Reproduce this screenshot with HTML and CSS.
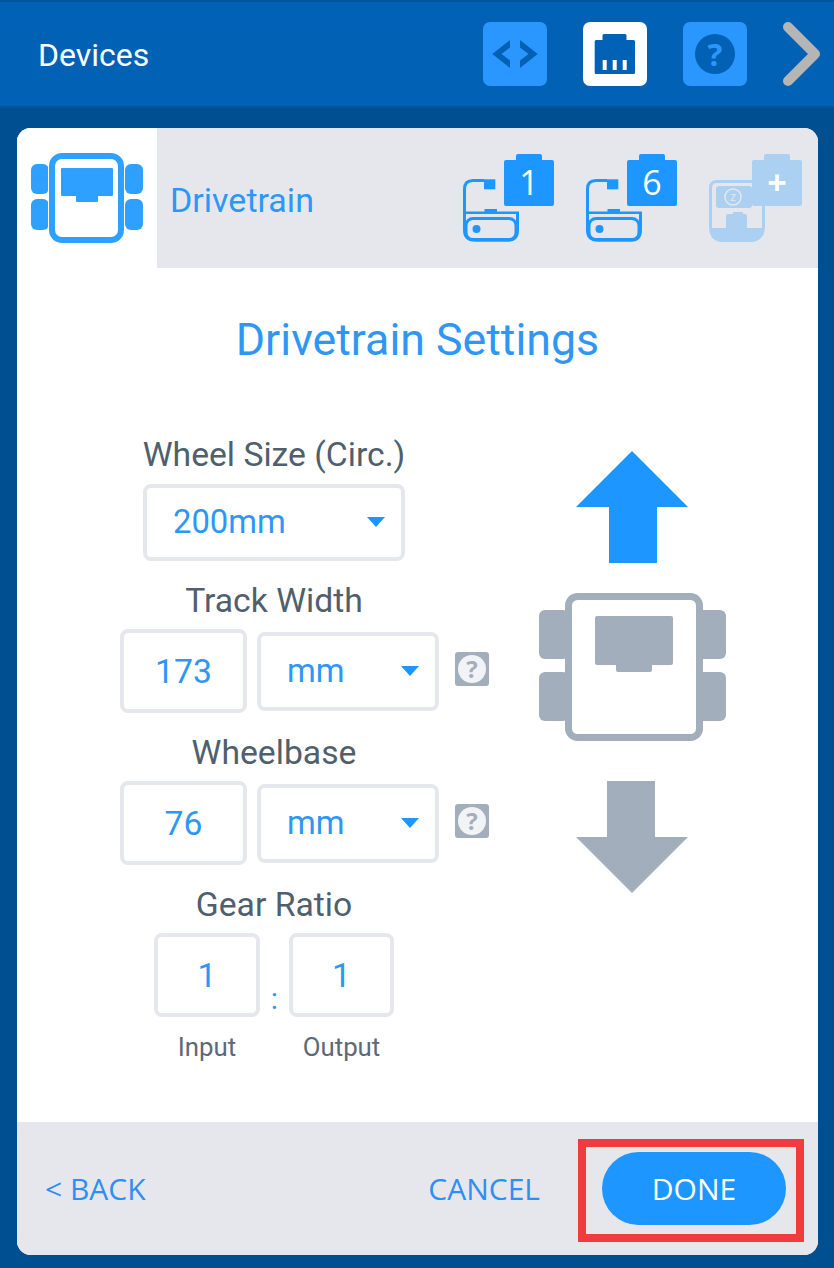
FILE: index.html
```html
<!DOCTYPE html>
<html>
<head>
  <title>Devices</title>
  <link rel="stylesheet" href="styles.css">
</head>
<body>
  <div class="header">
    <div class="header-title">Devices</div>
    <div class="tile">
      <svg width="64" height="64" viewBox="0 0 64 64"><path class="dark" d="M27 18V25.500L18.500 32L27 38.500V46L9.300 32Z"/><path class="dark" d="M37 18V25.500L45.500 32L37 38.500V46L54.700 32Z"/></svg>
    </div>
    <div class="tile tile-active">
      <svg width="64" height="64" viewBox="0 0 64 64"><path class="dark" d="M21 12H42Q43.500 12 43.500 13.500V18H50.500Q52 18 52 19.500V50.500Q52 52 50.500 52H13Q11.700 52 11.700 50.500V19.500Q11.700 18 13 18H19.500V13.500Q19.500 12 21 12Z"/><rect class="white" x="19.700" y="38" width="4" height="10"/><rect class="white" x="29.700" y="38" width="4" height="10"/><rect class="white" x="39.700" y="38" width="4" height="10"/></svg>
    </div>
    <div class="tile">
      <svg width="64" height="64" viewBox="0 0 64 64"><circle class="dark" cx="32" cy="32" r="20"/><text class="tile-q" x="32" y="44" text-anchor="middle">?</text></svg>
    </div>
    <svg class="chevron" width="37" height="64" viewBox="0 0 37 64"><path d="M5 5L32 32L5 59" fill="none" stroke="#b5b5b5" stroke-width="10" stroke-linecap="round" stroke-linejoin="round"/></svg>
  </div>

  <div class="card">
    <div class="tabs">
      <div class="tab-icon">
        <svg width="112" height="90" viewBox="0 0 112 90">
          <g class="accent">
            <rect x="0" y="11" width="18" height="30" rx="6"/>
            <rect x="0" y="46" width="18" height="31" rx="6"/>
            <rect x="94" y="11" width="18" height="30" rx="6"/>
            <rect x="94" y="46" width="18" height="31" rx="6"/>
            <path d="M31 15H81Q82 15 82 16V42Q82 43 81 43H67V48Q67 49 66 49H46Q45 49 45 48V43H31Q30 43 30 42V16Q30 15 31 15Z"/>
          </g>
          <rect x="21" y="3" width="69" height="84" rx="10" fill="none" stroke="#fff" stroke-width="8"/>
          <rect x="21" y="3" width="69" height="84" rx="10" fill="none" stroke="#2ea0ff" stroke-width="6"/>
        </svg>
      </div>
      <div class="tab-name">Drivetrain</div>
      <div class="ports">
        <svg class="port" width="92" height="88" viewBox="0 0 92 88">
          <use href="#port-shape"/>
          <path class="battery" d="M55 0H77Q79 0 79 2V6H89Q91 6 91 8V50Q91 52 89 52H43Q41 52 41 50V8Q41 6 43 6H53V2Q53 0 55 0Z"/>
          <text class="port-num" x="66" y="41" text-anchor="middle">1</text>
        </svg>
        <svg class="port" width="92" height="88" viewBox="0 0 92 88">
          <use href="#port-shape"/>
          <path class="battery" d="M55 0H77Q79 0 79 2V6H89Q91 6 91 8V50Q91 52 89 52H43Q41 52 41 50V8Q41 6 43 6H53V2Q53 0 55 0Z"/>
          <text class="port-num" x="66" y="41" text-anchor="middle">6</text>
        </svg>
        <svg class="port" width="94" height="88" viewBox="0 0 94 88">
          <path d="M1.500 34Q1.500 27.500 8 27.500H45M1.500 34V72Q1.500 86.500 14 86.500H40Q54.500 86.500 54.500 72V50" fill="none" stroke="#abd0f2" stroke-width="3"/>
          <path d="M3 74H17V62Q17 60 19 60H24V58H34V60H36Q38 60 38 62V74H54V76Q54 88 40 88H15Q3 88 3 76Z" fill="#abd0f2"/>
          <rect x="7" y="32" width="36" height="22" rx="3" fill="#abd0f2"/>
          <circle cx="24" cy="43" r="8" fill="none" stroke="#e6e7ed" stroke-width="1.500"/>
          <text class="sleep-z" x="24" y="47" text-anchor="middle">z</text>
          <path d="M55 0H77Q79 0 79 2V6H89Q91 6 91 8V50Q91 52 89 52H43Q41 52 41 50V8Q41 6 43 6H53V2Q53 0 55 0Z" fill="#abd0f2" transform="translate(2 0)"/>
          <text class="port-plus" x="68" y="41" text-anchor="middle">+</text>
        </svg>
      </div>
    </div>

    <div class="body">
      <h1 class="title">Drivetrain Settings</h1>
      <div class="main">
        <div class="form">
          <div class="label">Wheel Size (Circ.)</div>
          <div class="row row-center">
            <div class="select select-wide">200mm<span class="caret"></span></div>
          </div>
          <div class="label label-next">Track Width</div>
          <div class="row">
            <div class="input input-wide">173</div>
            <div class="select select-unit">mm<span class="caret"></span></div>
            <svg class="help" width="34" height="34" viewBox="0 0 34 34"><rect width="34" height="34" rx="3" fill="#a2aebb"/><circle cx="17" cy="17" r="14" fill="#f2f3f6"/><text class="help-q" x="17" y="26" text-anchor="middle">?</text></svg>
          </div>
          <div class="label label-next">Wheelbase</div>
          <div class="row">
            <div class="input input-wide">76</div>
            <div class="select select-unit">mm<span class="caret"></span></div>
            <svg class="help" width="34" height="34" viewBox="0 0 34 34"><rect width="34" height="34" rx="3" fill="#a2aebb"/><circle cx="17" cy="17" r="14" fill="#f2f3f6"/><text class="help-q" x="17" y="26" text-anchor="middle">?</text></svg>
          </div>
          <div class="label label-next">Gear Ratio</div>
          <div class="gear">
            <div class="input">1</div>
            <div class="colon">:</div>
            <div class="input">1</div>
            <div class="sublabel">Input</div>
            <div></div>
            <div class="sublabel">Output</div>
          </div>
        </div>
        <div class="preview">
          <svg class="arrow" width="112" height="112" viewBox="0 0 112 112"><path class="arrow-up" d="M56 0L112 56H81V112H33V56H0Z"/></svg>
          <svg width="187" height="148" viewBox="0 0 187 148">
            <g fill="#a2aebb">
              <rect x="0" y="17" width="30" height="49" rx="6"/>
              <rect x="0" y="79" width="30" height="49" rx="6"/>
              <rect x="157" y="17" width="30" height="49" rx="6"/>
              <rect x="157" y="79" width="30" height="49" rx="6"/>
            </g>
            <rect x="29.500" y="3.500" width="131" height="141" rx="9" fill="#fff" stroke="#a2aebb" stroke-width="7"/>
            <path fill="#a2aebb" d="M58 23H132Q134 23 134 25V70Q134 72 132 72H113V77Q113 79 111 79H79Q77 79 77 77V72H58Q56 72 56 70V25Q56 23 58 23Z"/>
          </svg>
          <svg class="arrow arrow-last" width="112" height="112" viewBox="0 0 112 112"><path fill="#a2aebb" d="M56 112L112 56H79V0H31V56H0Z"/></svg>
        </div>
      </div>
    </div>

    <div class="footer">
      <div class="back">&lt; BACK</div>
      <div class="cancel">CANCEL</div>
      <div class="done">
        DONE
        <div class="highlight"></div>
      </div>
    </div>
  </div>

  <svg class="defs" width="0" height="0">
    <defs>
      <g id="port-shape">
        <path d="M21 26.500H10Q1.500 26.500 1.500 35V76Q1.500 86.200 12 86.200H45Q54.500 86.200 54.500 76V59" fill="none" stroke="#1e96ff" stroke-width="3"/>
        <rect x="21" y="25.300" width="11.300" height="10" fill="#1e96ff"/>
        <path d="M3 57.500H21.500V55H34V57.500H56V60H3Z" fill="#1e96ff"/>
        <rect x="3" y="64.500" width="50" height="21" rx="7" fill="none" stroke="#1e96ff" stroke-width="3"/>
        <circle cx="13.500" cy="75" r="4" fill="#1e96ff"/>
      </g>
    </defs>
  </svg>
</body>
</html>
```

FILE: styles.css
```css
* {
  box-sizing: border-box;
}

body {
  margin: 0;
  width: 834px;
  height: 1268px;
  overflow: hidden;
  font-family: Roboto, sans-serif;
  background-color: #004f91;
}

.header {
  display: flex;
  align-items: center;
  height: 108px;
  padding: 0 0 1px 38px;
  background-color: #0061b5;
  border-top: 2px solid #00559c;
  border-bottom: 2px solid #00559c;
}

.header-title {
  flex: 1;
  padding-top: 2px;
  font-size: 32px;
  color: #fff;
}

.tile {
  width: 64px;
  height: 64px;
  margin-right: 36px;
  background-color: #2997ff;
  border-radius: 7px;
}

.tile svg {
  display: block;
}

.tile-active {
  background-color: #fff;
}

.dark {
  fill: #0061b5;
}

.white {
  fill: #fff;
}

.tile-q {
  font-family: "Open Sans", sans-serif;
  font-size: 31px;
  font-weight: 700;
  fill: #2997ff;
}

.chevron {
  margin-right: 14px;
}

.card {
  display: flex;
  flex-direction: column;
  height: 1127px;
  margin: 20px 16px 0 17px;
  background-color: #fff;
  border-radius: 14px;
  overflow: hidden;
}

.tabs {
  display: flex;
  align-items: center;
  height: 140px;
  background-color: #e6e7ed;
}

.tab-icon {
  display: flex;
  justify-content: center;
  align-items: center;
  width: 140px;
  height: 140px;
  background-color: #fff;
}

.accent {
  fill: #2ea0ff;
}

.tab-name {
  flex: 1;
  padding: 4px 0 0 13px;
  font-size: 34px;
  color: #2e97f5;
}

.ports {
  display: flex;
  gap: 31px;
  padding-right: 15px;
}

.port {
  display: block;
}

.battery {
  fill: #1e96ff;
}

.port-num {
  font-family: "Open Sans", sans-serif;
  font-size: 34px;
  fill: #fff;
}

.port-plus {
  font-family: "Open Sans", sans-serif;
  font-size: 34px;
  font-weight: 700;
  fill: #fff;
}

.sleep-z {
  font-family: "Open Sans", sans-serif;
  font-size: 12px;
  fill: #e6e7ed;
}

.body {
  flex: 1;
}

.title {
  height: 60px;
  margin: 42px 0 64px;
  font-size: 44.700px;
  font-weight: 400;
  line-height: 60px;
  text-align: center;
  color: #2e97f5;
}

.main {
  display: flex;
  padding-left: 103px;
}

.form {
  width: 369px;
}

.label {
  width: 308px;
  height: 40px;
  font-size: 33.700px;
  line-height: 41px;
  text-align: center;
  color: #4f5f6d;
}

.label-next {
  margin-top: 19px;
}

.row {
  display: flex;
  align-items: center;
  height: 84px;
  margin-top: 9px;
}

.row-center {
  width: 308px;
  justify-content: center;
  height: 77px;
  margin-top: 10px;
}

.select, .input {
  font-size: 33.700px;
  color: #2e97f5;
  background-color: #fff;
  border: 4px solid #e6e7ed;
  border-radius: 8px;
}

.select {
  display: flex;
  justify-content: space-between;
  align-items: center;
  padding: 0 16px 0 26px;
  font-size: 32.800px;
}

.select-wide {
  width: 262px;
  height: 77px;
  padding-bottom: 2px;
}

.select-unit {
  width: 182px;
  height: 79px;
  margin-left: 10px;
}

.caret {
  width: 0;
  height: 0;
  border-left: 9.500px solid transparent;
  border-right: 9.500px solid transparent;
  border-top: 10px solid #1e96ff;
}

.input {
  display: flex;
  justify-content: center;
  align-items: center;
  height: 84px;
}

.input-wide {
  width: 127px;
}

.help {
  margin: -4px 0 0 16px;
}

.help-q {
  font-family: "Open Sans", sans-serif;
  font-size: 24px;
  font-weight: 700;
  fill: #a2aebb;
}

.gear {
  display: grid;
  grid-template-columns: 106px 29px 105px;
  width: 240px;
  margin: 9px 0 0 34px;
}

.gear .input {
  padding-top: 1px;
}

.colon {
  align-self: end;
  font-size: 30px;
  line-height: 36px;
  text-align: center;
  color: #2e97f5;
}

.sublabel {
  margin-top: 15px;
  font-size: 25.800px;
  line-height: 30px;
  text-align: center;
  color: #5b6975;
}

.preview {
  display: flex;
  flex-direction: column;
  gap: 30px;
  margin: 17px 0 0 50px;
}

.arrow {
  margin-left: 37px;
}

.arrow-up {
  fill: #1e96ff;
}

.arrow-last {
  margin-top: 10px;
}

.footer {
  display: flex;
  align-items: center;
  height: 133px;
  padding: 0 32px 0 28px;
  font-family: "Open Sans", sans-serif;
  font-size: 30px;
  color: #2e8ff0;
  background-color: #e6e7ed;
}

.back {
  flex: 1;
}

.cancel {
  margin-right: 62px;
}

.done {
  position: relative;
  width: 184px;
  height: 73px;
  line-height: 73px;
  text-align: center;
  color: #fff;
  background-color: #1e96ff;
  border-radius: 37px;
}

.highlight {
  position: absolute;
  top: -13px;
  right: -18px;
  bottom: -17px;
  left: -24px;
  border: 8px solid #f23c3c;
}

.defs {
  position: absolute;
}
```
